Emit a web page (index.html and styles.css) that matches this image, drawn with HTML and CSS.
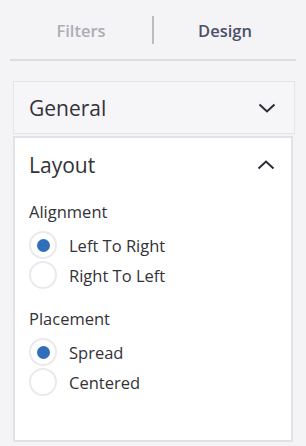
FILE: index.html
```html
<!DOCTYPE html>
<html lang="en">
<head>
<meta charset="UTF-8">
<meta name="viewport" content="width=device-width, initial-scale=1.0">
<title>Design</title>
<link rel="stylesheet" href="styles.css">
</head>
<body>
<div class="pane">
  <div class="tabs">
    <div class="tab">Filters</div>
    <div class="tab-sep"></div>
    <div class="tab active">Design</div>
  </div>

  <div class="section collapsed">
    <div class="section-head">
      <span>General</span>
      <svg class="chev" width="18" height="10" viewBox="0 0 18 10"><path d="M1.5 1.5 L9 8.5 L16.5 1.5" fill="none" stroke="#2b2b33" stroke-width="2"/></svg>
    </div>
  </div>

  <div class="section open">
    <div class="section-head">
      <span>Layout</span>
      <svg class="chev" width="18" height="10" viewBox="0 0 18 10"><path d="M1.5 8.5 L9 1.5 L16.5 8.5" fill="none" stroke="#2b2b33" stroke-width="2"/></svg>
    </div>
    <div class="section-body">
      <div class="group-label">Alignment</div>
      <label class="radio"><span class="dot checked"></span>Left To Right</label>
      <label class="radio"><span class="dot"></span>Right To Left</label>

      <div class="group-label">Placement</div>
      <label class="radio"><span class="dot checked"></span>Spread</label>
      <label class="radio"><span class="dot"></span>Centered</label>
    </div>
  </div>
</div>
</body>
</html>
```

FILE: styles.css
```css
body {
  margin: 0;
  background-color: #f4f3f6;
  font-family: 'Open Sans', 'Noto Sans', sans-serif;
  color: #333238;
}
.pane {
  padding: 0 10px;
}
.tabs {
  display: flex;
  align-items: center;
  height: 59px;
  border-bottom: 2px solid #dedce1;
}
.tab {
  flex: 1;
  text-align: center;
  font-size: 16.5px;
  font-weight: 600;
  color: #aeacb4;
  padding-top: 2px;
}
.tab.active {
  color: #4b4f68;
}
.tab-sep {
  width: 2px;
  height: 28px;
  background-color: #bdbbc2;
}
.section {
  margin: 0 1px 0 3px;
  border: 1px solid #e6e4e9;
}
.section.collapsed {
  margin-top: 20px;
  background-color: #f6f5f8;
  height: 51px;
}
.section.open {
  margin: 2px 3px 0 3px;
  background-color: #fff;
  border: 2px solid #e2e1e5;
  height: 302px;
}
.section-head {
  display: flex;
  align-items: center;
  justify-content: space-between;
  height: 52px;
  padding: 0 18px 0 15px;
  font-size: 21px;
}
.open .section-head {
  height: 54px;
  padding: 0 16px 0 14px;
}
.section-body {
  padding: 8px 14px 0;
}
.group-label {
  font-size: 16.5px;
  line-height: 24px;
  margin-bottom: 6px;
}
.radio {
  display: flex;
  align-items: center;
  height: 30px;
  font-size: 16.5px;
}
.dot {
  box-sizing: border-box;
  width: 28px;
  height: 28px;
  margin-right: 12px;
  border: 2px solid #ebe9ee;
  border-radius: 50%;
  display: flex;
  align-items: center;
  justify-content: center;
}
.dot.checked::after {
  content: '';
  width: 13px;
  height: 13px;
  border-radius: 50%;
  background-color: #2f6fba;
}
.radio + .group-label {
  margin-top: 17px;
}
```
